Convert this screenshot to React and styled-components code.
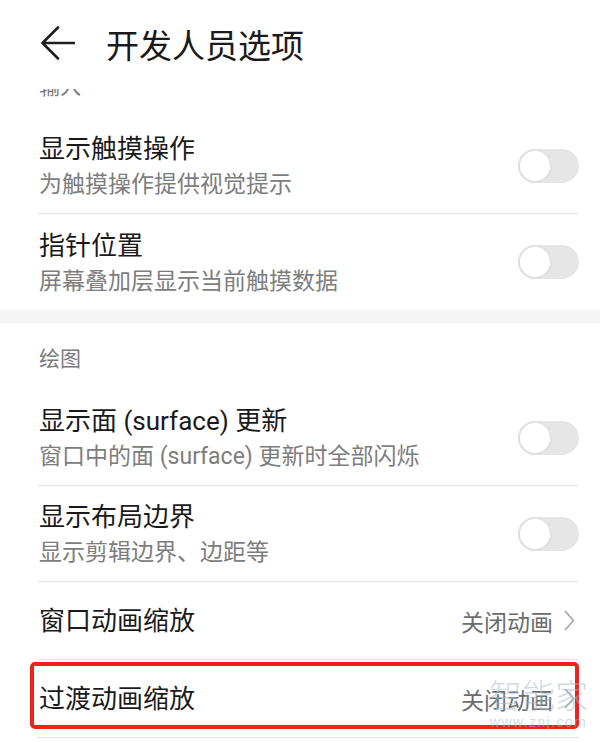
import React from 'react';
import styled, { createGlobalStyle } from 'styled-components';

const GlobalStyle = createGlobalStyle`
  html, body {
    margin: 0;
    padding: 0;
    background: #ffffff;
  }
  body {
    font-family: Roboto, "Noto Sans CJK SC", sans-serif;
    -webkit-font-smoothing: antialiased;
  }
`;

const Screen = styled.div`
  position: relative;
  width: 600px;
  height: 742px;
  overflow: hidden;
  background: #ffffff;
  display: flex;
  flex-direction: column;
`;

const AppBar = styled.header`
  position: relative;
  z-index: 2;
  flex-shrink: 0;
  height: 89px;
  display: flex;
  align-items: center;
  gap: 31px;
  padding: 0 0 0 41px;
  background: #ffffff;
`;

const BackButton = styled.button`
  display: flex;
  align-items: center;
  justify-content: center;
  width: 34px;
  height: 34px;
  margin-top: -4px;
  padding: 0;
  border: none;
  background: transparent;
  color: #1f1f1f;
`;

const Title = styled.h1`
  margin: 0;
  margin-top: -2px;
  font-size: 33px;
  font-weight: 400;
  color: #1a1a1a;
  letter-spacing: 0;
`;

const Viewport = styled.div`
  flex: 1;
  overflow: hidden;
`;

const List = styled.div`
  display: flex;
  flex-direction: column;
`;

const Group = styled.section`
  display: flex;
  flex-direction: column;
  padding: 0 22px 0 38px;
`;

const GroupLabel = styled.div`
  height: 67px;
  display: flex;
  align-items: center;
  font-size: 21px;
  color: #7a7a7a;
  padding-left: 1px;
`;

const Band = styled.div`
  height: 13px;
  background: #f5f5f5;
`;

const Row = styled.div`
  position: relative;
  display: flex;
  align-items: center;
  justify-content: space-between;
  box-sizing: border-box;
  height: ${(p) => (p.$tall ? 96 : 78)}px;
  border-bottom: ${(p) => (p.$divider ? '1px solid #e3e3e3' : 'none')};

  ${(p) =>
    p.$marked &&
    `
    &::after {
      content: '';
      position: absolute;
      left: -8px;
      right: -1px;
      top: 2px;
      bottom: 8px;
      border: 4px solid #f2201c;
      border-radius: 5px;
      pointer-events: none;
    }
  `}
`;

const TextBlock = styled.div`
  display: flex;
  flex-direction: column;
  padding-left: 1px;
`;

const RowTitle = styled.div`
  font-size: 26px;
  line-height: 36px;
  color: #1a1a1a;
`;

const RowSub = styled.div`
  margin-top: 3px;
  font-size: 23px;
  line-height: 30px;
  color: #7d7d7d;
`;

const Value = styled.div`
  display: flex;
  align-items: center;
  gap: 11px;
  margin-right: 3px;
  font-size: 23px;
  color: #6b6b6b;
`;

const Switch = styled.span`
  position: relative;
  flex-shrink: 0;
  width: 61px;
  height: 34px;
  border-radius: 17px;
  background: ${(p) => (p.$on ? '#007dff' : '#e6e6e6')};
  margin-right: -1px;

  &::before {
    content: '';
    position: absolute;
    top: 0;
    left: ${(p) => (p.$on ? '27px' : '0')};
    width: 30px;
    height: 30px;
    border-radius: 50%;
    background: #ffffff;
    border: 2px solid #e1e1e1;
  }
`;

const Watermark = styled.div`
  position: absolute;
  z-index: 3;
  right: 12px;
  bottom: 13px;
  display: flex;
  flex-direction: column;
  align-items: center;
  color: rgba(165, 188, 204, 0.55);
  pointer-events: none;
`;

const WatermarkLogo = styled.span`
  font-size: 33px;
  line-height: 36px;
  font-weight: 300;
`;

const WatermarkUrl = styled.span`
  font-family: "Liberation Sans", sans-serif;
  font-size: 14px;
  line-height: 14px;
  letter-spacing: 1.4px;
`;

const BackArrow = () => (
  <svg width="34" height="34" viewBox="0 0 34 34" fill="none">
    <path
      d="M17 1.5 L1.5 17 L17 32.5 M1.5 17 H33"
      stroke="currentColor"
      strokeWidth="2.6"
      strokeLinecap="round"
      strokeLinejoin="round"
    />
  </svg>
);

const Chevron = () => (
  <svg width="11" height="21" viewBox="0 0 11 21" fill="none">
    <path
      d="M1.5 1.5 L9.5 10.5 L1.5 19.5"
      stroke="#a8a8a8"
      strokeWidth="1.8"
      strokeLinecap="round"
      strokeLinejoin="round"
    />
  </svg>
);

const inputRows = [
  { title: '显示触摸操作', sub: '为触摸操作提供视觉提示' },
  { title: '指针位置', sub: '屏幕叠加层显示当前触摸数据' },
];

const drawRows = [
  { title: '显示面 (surface) 更新', sub: '窗口中的面 (surface) 更新时全部闪烁' },
  { title: '显示布局边界', sub: '显示剪辑边界、边距等' },
  { title: '窗口动画缩放', value: '关闭动画' },
  { title: '过渡动画缩放', value: '关闭动画', marked: true },
];

// the list is scrolled a little, so the first group label sits under the bar
const SCROLL_OFFSET = 38;

const SettingRow = ({ row, divider }) => (
  <Row $tall={!!row.sub} $divider={divider} $marked={row.marked}>
    <TextBlock>
      <RowTitle>{row.title}</RowTitle>
      {row.sub && <RowSub>{row.sub}</RowSub>}
    </TextBlock>
    {row.value ? (
      <Value>
        {row.value}
        <Chevron />
      </Value>
    ) : (
      <Switch $on={false} />
    )}
  </Row>
);

const App = () => {
  return (
    <>
      <GlobalStyle />
      <Screen>
        <AppBar>
          <BackButton aria-label="返回">
            <BackArrow />
          </BackButton>
          <Title>开发人员选项</Title>
        </AppBar>

        <Viewport>
          <List style={{ marginTop: -SCROLL_OFFSET }}>
            <Group>
              <GroupLabel>输入</GroupLabel>
              {inputRows.map((row, i) => (
                <SettingRow key={row.title} row={row} divider={i < inputRows.length - 1} />
              ))}
            </Group>
            <Band />
            <Group>
              <GroupLabel>绘图</GroupLabel>
              {drawRows.map((row) => (
                <SettingRow key={row.title} row={row} divider />
              ))}
            </Group>
          </List>
        </Viewport>

        <Watermark>
          <WatermarkLogo>智能家</WatermarkLogo>
          <WatermarkUrl>www.znj.com</WatermarkUrl>
        </Watermark>
      </Screen>
    </>
  );
};

export default App;
